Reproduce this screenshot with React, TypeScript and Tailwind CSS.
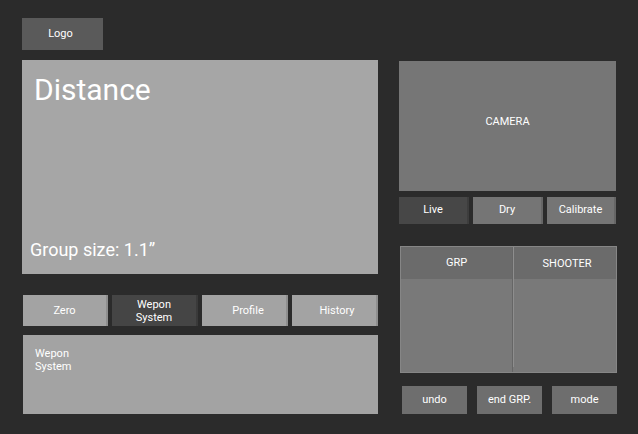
const tabs = [
  { label: 'Zero', active: false, w: 'w-[85px]', pad: '' },
  { label: 'Wepon\nSystem', active: true, w: 'w-[86px]', pad: '' },
  { label: 'Profile', active: false, w: 'w-[86px]', pad: 'pl-[8px]' },
  { label: 'History', active: false, w: 'w-[86px]', pad: 'pl-[6px]' },
];

const modes = [
  { label: 'Live', active: true, w: 'w-[70px]' },
  { label: 'Dry', active: false, w: 'w-[70px]' },
  { label: 'Calibrate', active: false, w: 'w-[69px]' },
];

const actions = ['undo', 'end GRP.', 'mode'];

export default function App() {
  return (
    <div
      className="w-[638px] h-[434px] bg-[#2b2b2b] text-white flex overflow-hidden"
      style={{ fontFamily: 'Roboto, "Liberation Sans", sans-serif' }}
    >
      {/* Left column */}
      <div className="w-[356px] ml-[22px] pt-[18px] flex flex-col">
        <div className="w-[81px] h-[32px] bg-[#5a5a5a] flex items-center justify-center text-[11px] pr-[4px]">
          Logo
        </div>

        <div className="mt-[10px] h-[214px] bg-[#a6a6a6] flex flex-col justify-between">
          <div className="pl-[12px] pt-[15px] text-[30px] leading-none">Distance</div>
          <div className="pl-[8px] pb-[15px] text-[18px] leading-none">Group size: 1.1”</div>
        </div>

        <div className="mt-[21px] ml-px h-[31px] flex gap-[4px]">
          {tabs.map((t) => (
            <div
              key={t.label}
              className={`${t.w} shrink-0 flex items-center justify-center text-center whitespace-pre-line text-[11px] leading-[13px] border-r-2 ${t.pad} ${
                t.active ? 'bg-[#454545] border-[#3a3a3a]' : 'bg-[#a3a3a3] border-[#8e8e8e]'
              }`}
            >
              {t.label}
            </div>
          ))}
        </div>

        <div className="mt-[9px] ml-px h-[79px] bg-[#a3a3a3] pl-[12px] pt-[12px] text-[11px] leading-[13px]">
          Wepon
          <br />
          System
        </div>
      </div>

      {/* Right column */}
      <div className="ml-[21px] w-[218px] pt-[61px] flex flex-col">
        <div className="w-[217px] h-[130px] bg-[#767676] flex items-center justify-center text-[11px] pb-[8px]">
          CAMERA
        </div>

        <div className="mt-[6px] h-[27px] flex gap-[4px]">
          {modes.map((m) => (
            <div
              key={m.label}
              className={`${m.w} flex items-center justify-center text-[11px] border-r-2 ${
                m.active ? 'bg-[#474747] border-[#3d3d3d]' : 'bg-[#757575] border-[#666666]'
              }`}
            >
              {m.label}
            </div>
          ))}
        </div>

        <div className="mt-[22px] ml-px w-[217px] h-[127px] bg-[#797979] border border-[#868686] flex">
          <div className="flex-1 flex flex-col border-r border-[#666666]">
            <div className="h-[32px] bg-[#6b6b6b] flex items-center justify-center text-[11px]">GRP</div>
          </div>
          <div className="w-px bg-[#8e8e8e] mb-[5px]" />
          <div className="w-[102px] flex flex-col">
            <div className="h-[32px] bg-[#6b6b6b] flex items-center justify-center text-[11px] pl-[4px] pt-[2px]">
              SHOOTER
            </div>
          </div>
        </div>

        <div className="mt-[13px] ml-[3px] h-[28px] flex justify-between">
          {actions.map((a) => (
            <div
              key={a}
              className="w-[65px] bg-[#6e6e6e] flex items-center justify-center text-[11px]"
            >
              {a}
            </div>
          ))}
        </div>
      </div>
    </div>
  );
}
